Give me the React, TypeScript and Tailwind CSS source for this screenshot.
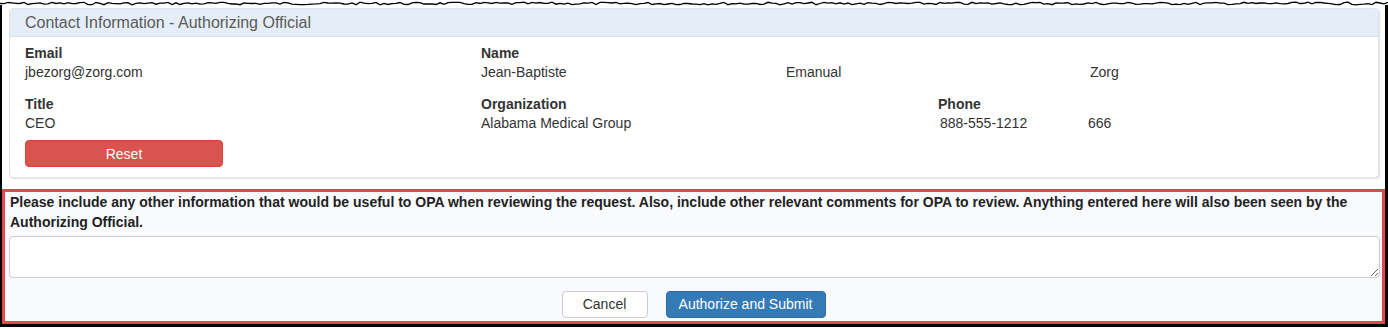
import React from "react";

// torn top edge of the screenshot
function TornEdge() {
  const pts: string[] = [];
  let seed = 7;
  const rand = () => {
    seed = (seed * 9301 + 49297) % 233280;
    return seed / 233280;
  };
  for (let x = 0; x <= 1388; x += 4) {
    const y = 2.2 + rand() * 2.6;
    pts.push(`${x},${y.toFixed(1)}`);
  }
  return (
    <svg width="1388" height="8" viewBox="0 0 1388 8" className="block">
      <polyline points={pts.join(" ")} fill="none" stroke="#000" strokeWidth="1.3" />
    </svg>
  );
}

function Field({ label, children }: { label: string; children: React.ReactNode }) {
  return (
    <div>
      <div className="text-[14px] font-bold leading-[20px]">{label}</div>
      <div className="text-[14px] leading-[19px]">{children}</div>
    </div>
  );
}

export default function App() {
  return (
    <div className="w-[1388px] h-[329px] bg-white overflow-hidden font-['Liberation_Sans',Arial,sans-serif] text-[#333]">
      <TornEdge />
      <div className="-mt-[3px] h-[322px] border-l-2 border-r-[3px] border-b-[3px] border-black flex flex-col">
        <div className="h-[3px]" />
        {/* contact panel */}
        <div className="ml-[7px] mr-[6px] h-[170px] border border-[#dfe3e8] rounded-[4px] shadow-[1px_1px_2px_rgba(0,0,0,0.12)] bg-white flex flex-col">
          <div className="h-[28px] bg-[#e5eef8] border-b border-[#d6dfea] rounded-t-[4px] pl-[15px] flex items-center">
            <span className="text-[16px] text-[#5a5a5a]">Contact Information - Authorizing Official</span>
          </div>
          <div className="pt-[6px] pl-[15px]">
            <div className="flex">
              <div className="w-[456px]">
                <Field label="Email">jbezorg@zorg.com</Field>
              </div>
              <div>
                <div className="text-[14px] font-bold leading-[20px]">Name</div>
                <div className="flex text-[14px] leading-[19px]">
                  <span className="w-[305px]">Jean-Baptiste</span>
                  <span className="w-[304px]">Emanual</span>
                  <span>Zorg</span>
                </div>
              </div>
            </div>
            <div className="flex mt-[12px]">
              <div className="w-[456px]">
                <Field label="Title">CEO</Field>
              </div>
              <div className="w-[457px]">
                <Field label="Organization">Alabama Medical Group</Field>
              </div>
              <div>
                <div className="text-[14px] font-bold leading-[20px]">Phone</div>
                <div className="flex text-[14px] leading-[19px] pl-[2px]">
                  <span className="w-[148px]">888-555-1212</span>
                  <span>666</span>
                </div>
              </div>
            </div>
            <button className="mt-[7px] w-[198px] h-[27px] rounded-[4px] bg-[#d9534f] border border-[#d43f3a] text-white text-[14px] leading-none">
              Reset
            </button>
          </div>
        </div>

        {/* comments section */}
        <div className="mt-[11px] flex-1 border-[3px] border-[#e2474b] bg-[#f8fafd] flex flex-col">
          <p className="pl-[5px] text-[14px] font-bold leading-[20px] text-[#222]">
            Please include any other information that would be useful to OPA when reviewing the request. Also, include other relevant comments for OPA to review. Anything entered here will also been seen by the Authorizing Official.
          </p>
          <textarea className="ml-[4px] mr-[2px] mt-[4px] h-[42px] bg-white border border-[#cccccc] rounded-[4px] outline-none px-2 py-1 text-[14px]" />
          <div className="mt-[13px] flex justify-center gap-[18px]">
            <button className="w-[86px] h-[27px] bg-white border border-[#cccccc] rounded-[4px] text-[14px] text-[#333]">
              Cancel
            </button>
            <button className="w-[160px] h-[27px] bg-[#337ab7] border border-[#2e6da4] rounded-[4px] text-[14px] text-white">
              Authorize and Submit
            </button>
          </div>
        </div>
      </div>
    </div>
  );
}
